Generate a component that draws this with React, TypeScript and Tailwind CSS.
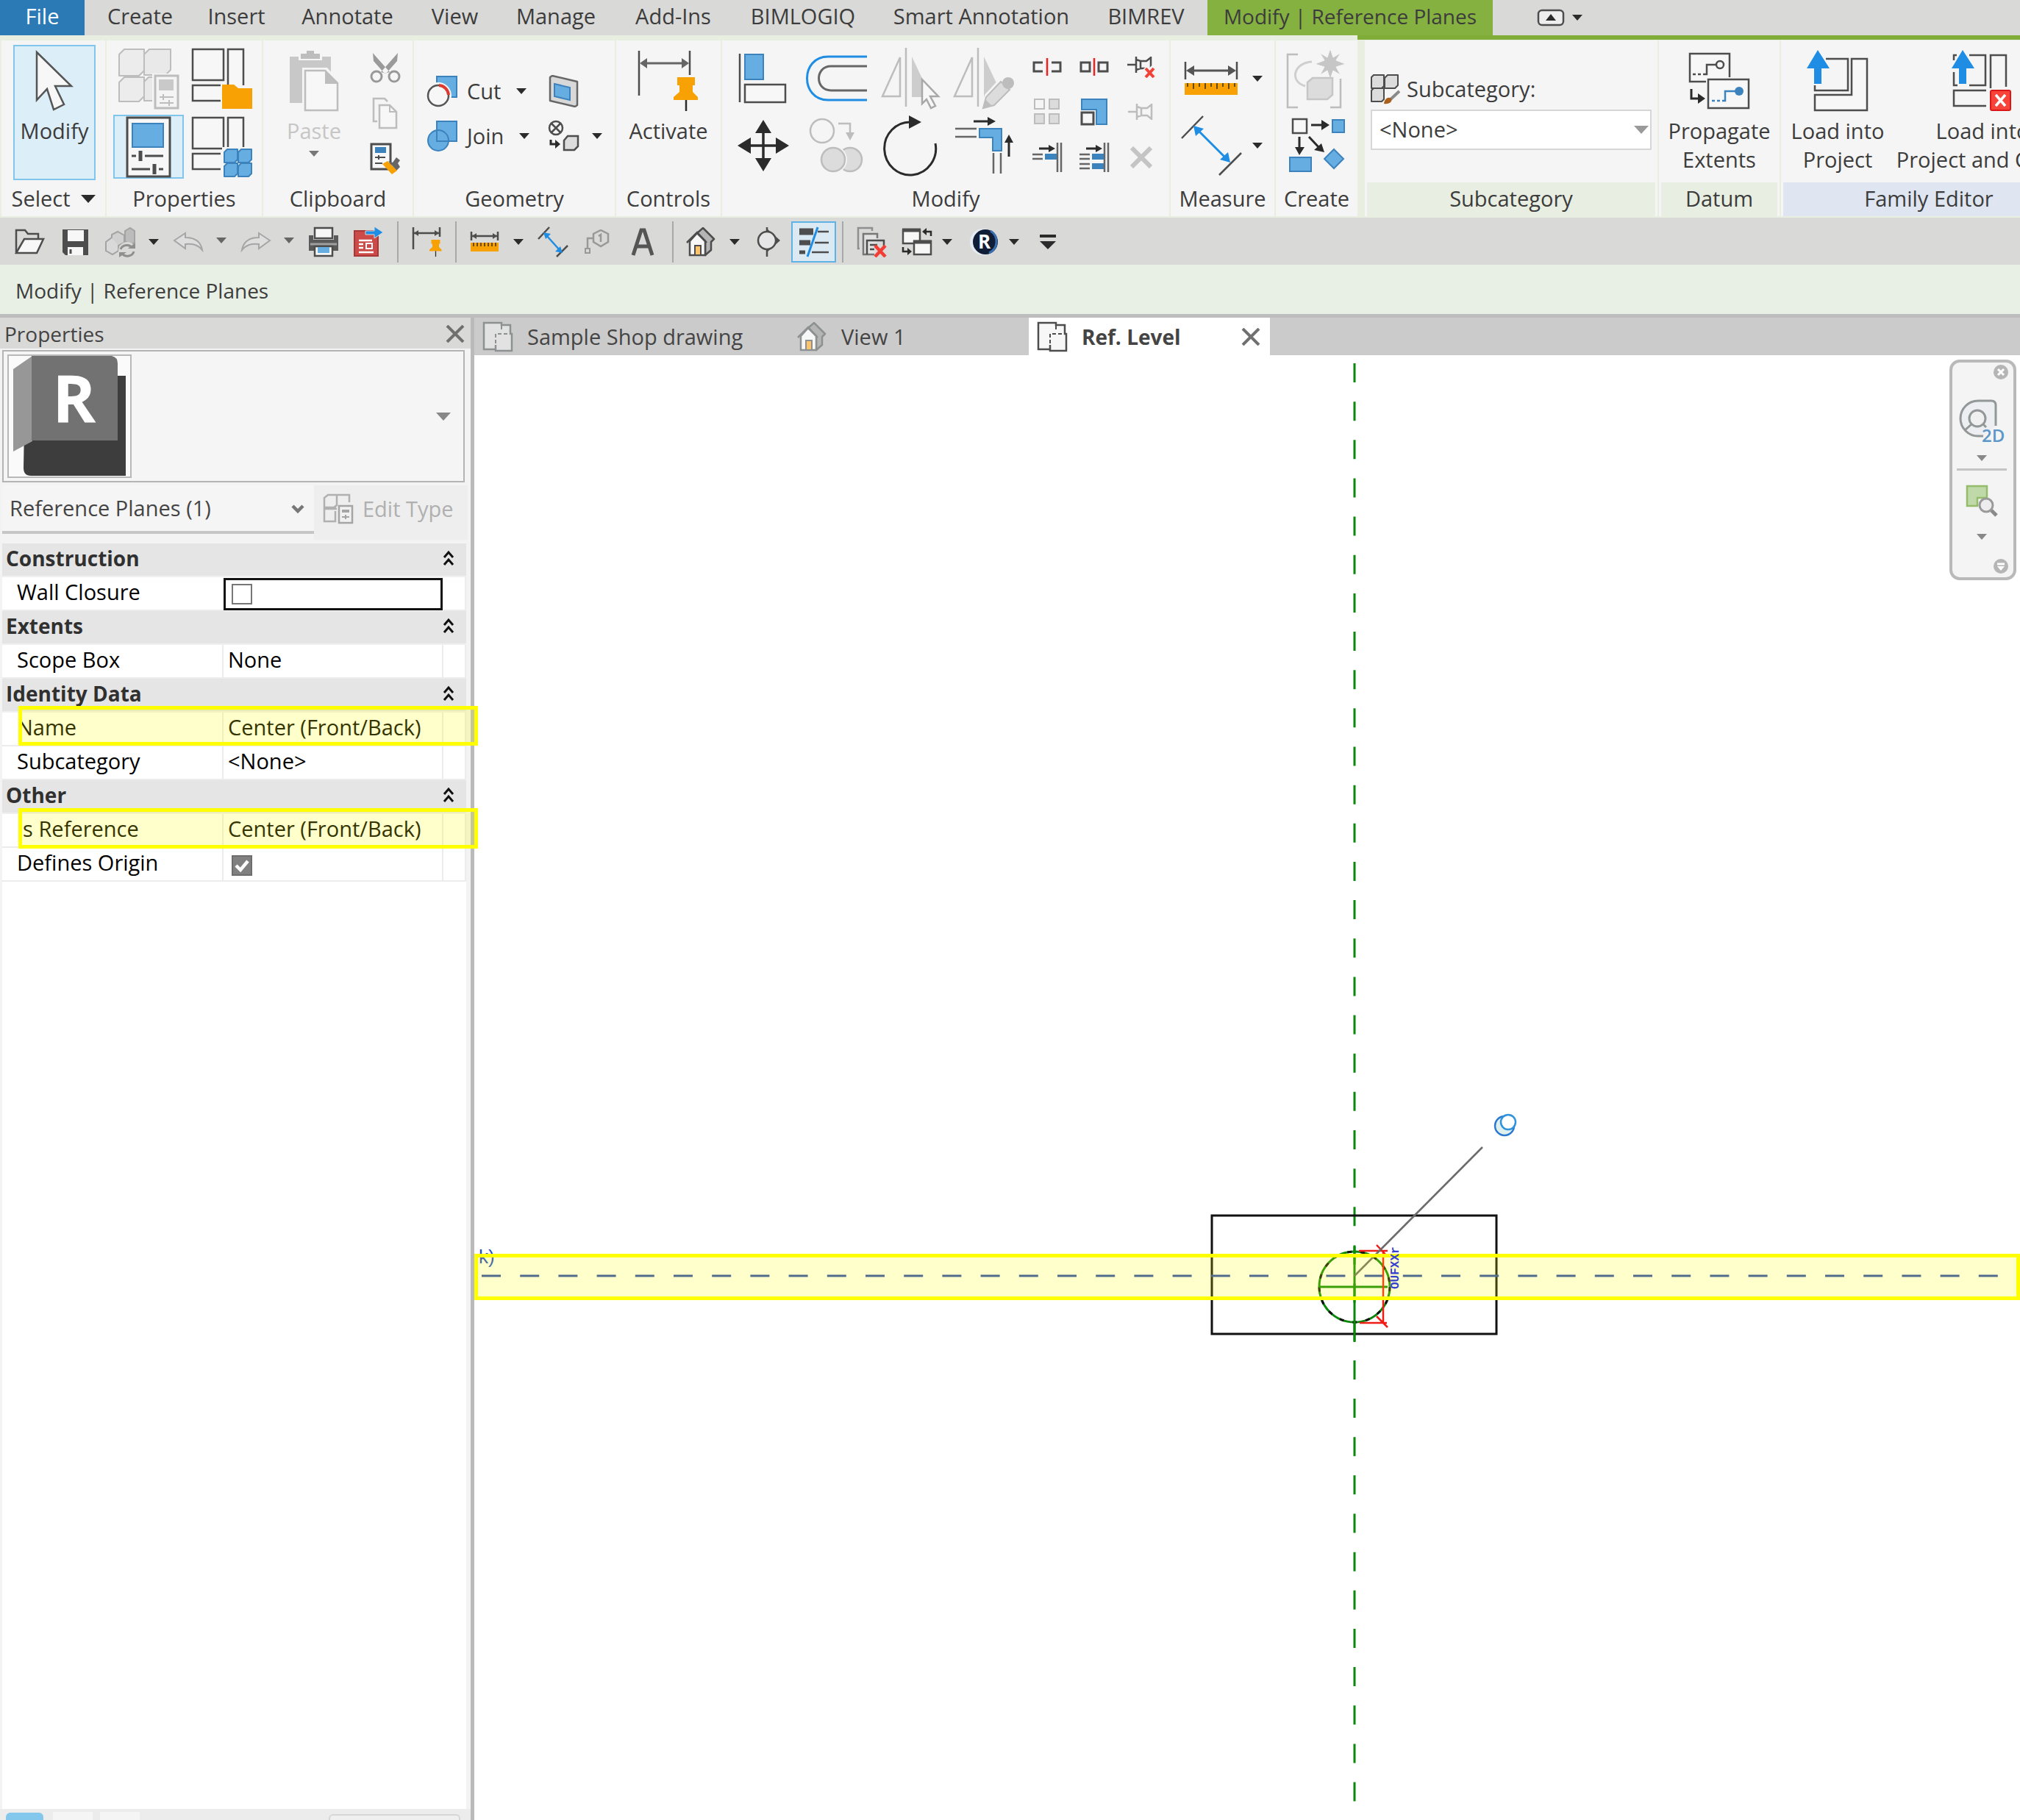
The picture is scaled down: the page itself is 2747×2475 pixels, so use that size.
import React from "react";
import type { ReactNode } from "react";

/* ---------- shared drawing helpers ---------- */

const DARK = "#4d4d4d";
const INK = "#2b2b2b";
const BLUE = "#66ade2";
const BLUE_EDGE = "#3c82bd";
const VIVID = "#1e8de3";
const ORANGE = "#f7a105";
const MUTE = "#bdbdbd";
const PALE = "#dcdcdc";
const PAPER = "#f7f7f7";

function Svg({ w, h, children }: { w: number; h: number; children: ReactNode }) {
  return (
    <svg width={w} height={h} viewBox={`0 0 ${w} ${h}`} fill="none" className="block shrink-0" aria-hidden="true">
      {children}
    </svg>
  );
}

function Caret({ color = INK }: { color?: string }) {
  return (
    <Svg w={14} h={8}>
      <path d="M0 0H14L7 8Z" fill={color} />
    </Svg>
  );
}

function Cube({ x, y, w, h, fill, edge }: { x: number; y: number; w: number; h: number; fill: string; edge: string }) {
  const b = Math.round(w / 5);
  return (
    <path
      d={`M${x} ${y + b}L${x + b} ${y}H${x + w}V${y + h - b}L${x + w - b} ${y + h}H${x}Z`}
      fill={fill}
      stroke={edge}
      strokeWidth={2}
      strokeLinejoin="round"
    />
  );
}

function Pin({ x, y, s = 1 }: { x: number; y: number; s?: number }) {
  return (
    <g transform={`translate(${x} ${y}) scale(${s})`}>
      <path d="M17 30V46" stroke={INK} strokeWidth={2.5} />
      <path d="M5 0H29V11H26V20L33 27V31H0V27L8 20V11H5Z" fill={ORANGE} />
    </g>
  );
}

/* ---------- ribbon icons ---------- */

const ArrowCursor = () => (
  <Svg w={52} h={84}>
    <path d="M2 3L49 49H27L39 74L25 81L16 53L2 68Z" fill={PAPER} stroke="#555" strokeWidth={2.5} />
  </Svg>
);

const TypeProperties = () => (
  <Svg w={84} h={84}>
    <Cube x={36} y={2} w={36} h={35} fill="#e9e9e9" edge={MUTE} />
    <Cube x={2} y={2} w={34} h={36} fill="#ececec" edge={MUTE} />
    <Cube x={36} y={40} w={30} h={32} fill="#e9e9e9" edge={MUTE} />
    <Cube x={2} y={40} w={34} h={33} fill="#ececec" edge={MUTE} />
    <rect x={47} y={35} width={37} height={49} fill="#f5f5f5" />
    <rect x={51} y={38} width={31} height={44} fill="#f4f4f4" stroke={MUTE} strokeWidth={3} />
    <rect x={56} y={43} width={20} height={15} fill="#c9c9c9" />
    <path d="M57 67H76M57 75H76M62 63V71M70 71V79" stroke={MUTE} strokeWidth={2} />
  </Svg>
);

const FamilyFrame = () => (
  <g stroke={DARK} strokeWidth={2.5}>
    <rect x={2} y={2} width={42} height={42} fill={PAPER} />
    <path d="M50 52V2H71V51" fill={PAPER} />
    <path d="M40 51H2V72H40" fill={PAPER} />
  </g>
);

const FamilyCategory = () => (
  <Svg w={84} h={84}>
    <FamilyFrame />
    <path d="M42 50H58L64 55H83V83H42Z" fill={ORANGE} />
  </Svg>
);

const FamilyTypes = () => (
  <Svg w={84} h={84}>
    <FamilyFrame />
    <rect x={42} y={42} width={42} height={42} fill="#f5f5f5" />
    <Cube x={45} y={45} w={18} h={18} fill={BLUE} edge={BLUE_EDGE} />
    <Cube x={64} y={45} w={18} h={18} fill={BLUE} edge={BLUE_EDGE} />
    <Cube x={45} y={64} w={18} h={18} fill={BLUE} edge={BLUE_EDGE} />
    <Cube x={64} y={64} w={18} h={18} fill={BLUE} edge={BLUE_EDGE} />
  </Svg>
);

const PropertiesIcon = () => (
  <Svg w={62} h={84}>
    <rect x={2} y={2} width={58} height={80} fill={PAPER} stroke={DARK} strokeWidth={3} />
    <rect x={9} y={10} width={42} height={32} fill={BLUE} stroke={BLUE_EDGE} strokeWidth={2} />
    <path d="M8 54H51M8 72H51" stroke={DARK} strokeWidth={3} />
    <path d="M14 54H26M33 72H45" stroke={PAPER} strokeWidth={5} />
    <path d="M20 47V61M39 65V79" stroke={DARK} strokeWidth={5} />
  </Svg>
);

const PasteIcon = () => (
  <Svg w={70} h={86}>
    <rect x={2} y={10} width={56} height={63} fill="#c8c8c8" />
    <rect x={14} y={6} width={32} height={9} fill="#f5f5f5" />
    <rect x={25} y={2} width={10} height={8} fill={MUTE} />
    <rect x={17} y={6} width={26} height={7} fill={MUTE} />
    <path d="M19 25H53L69 43V86H19Z" fill="#f5f5f5" />
    <path d="M23 29H50L67 46V83H23Z" fill={PAPER} stroke={MUTE} strokeWidth={2.5} />
    <path d="M50 28V47H68Z" fill={MUTE} />
  </Svg>
);

const ScissorsIcon = () => (
  <Svg w={42} h={42}>
    <path d="M27 27L4 1L5 12L20 29ZM15 27L38 1L37 12L22 29Z" fill="#9a9a9a" />
    <circle cx={9} cy={33} r={7} stroke="#999" strokeWidth={3} />
    <circle cx={33} cy={33} r={7} stroke="#999" strokeWidth={3} />
  </Svg>
);

const CopyPages = () => (
  <Svg w={36} h={44}>
    <path d="M7 33H2V2H17L21 6" stroke={MUTE} strokeWidth={2.5} />
    <path d="M10 11H24L33 20V42H10Z" fill={PAPER} stroke={MUTE} strokeWidth={2.5} />
    <path d="M24 11V20H33" stroke={MUTE} strokeWidth={2} />
  </Svg>
);

const MatchType = () => (
  <Svg w={42} h={44}>
    <rect x={2} y={2} width={26} height={34} fill={PAPER} stroke={DARK} strokeWidth={3} />
    <rect x={7} y={6} width={15} height={8} fill={BLUE_EDGE} />
    <path d="M7 20H21M7 28H17M12 17V23" stroke={DARK} strokeWidth={2} />
    <path d="M25 25L31 27L36 20L41 24L38 28L41 33L36 38Z" fill="#666" />
    <path d="M17 29L24 25L37 38L30 43Z" fill={ORANGE} />
  </Svg>
);

const CutGeometry = () => (
  <Svg w={42} h={44}>
    <rect x={14} y={2} width={27} height={28} fill={BLUE} stroke={BLUE_EDGE} strokeWidth={2} />
    <circle cx={16} cy={28} r={18} fill="#f5f5f5" />
    <circle cx={16} cy={28} r={14} fill={PAPER} stroke="#555" strokeWidth={2.5} />
    <path d="M17 14A14 14 0 0 1 30 27" stroke="#dd3a30" strokeWidth={4} />
  </Svg>
);

const JoinGeometry = () => (
  <Svg w={42} h={44}>
    <rect x={14} y={2} width={27} height={27} fill={BLUE} stroke={BLUE_EDGE} strokeWidth={2} />
    <circle cx={16} cy={28} r={14} fill={BLUE} stroke={BLUE_EDGE} strokeWidth={2} />
    <path d="M14 14V29H29" stroke={BLUE_EDGE} strokeWidth={2} />
  </Svg>
);

const VoidPanel = () => (
  <Svg w={42} h={44}>
    <path d="M3 3L6 1L40 9V41L37 43L3 35Z" fill="#d8d8d8" stroke="#666" strokeWidth={2.5} strokeLinejoin="round" />
    <path d="M9 12L30 17V34L9 29Z" fill={BLUE} stroke={BLUE_EDGE} strokeWidth={2} />
  </Svg>
);

const CopeIcon = () => (
  <Svg w={44} h={44}>
    <circle cx={11} cy={11} r={9} stroke={DARK} strokeWidth={2.5} />
    <path d="M5 5L17 17M17 5L5 17" stroke={DARK} strokeWidth={2.5} />
    <path d="M4 27V33H12" stroke={INK} strokeWidth={3} />
    <path d="M10 27L17 33L10 39Z" fill={INK} />
    <path d="M22 28L27 22H41V36L36 41H22Z" fill={PALE} stroke={DARK} strokeWidth={2.5} />
  </Svg>
);

const ActivateDimension = () => (
  <Svg w={84} h={86}>
    <path d="M2 2V63M71 2V35" stroke={DARK} strokeWidth={2.5} />
    <path d="M10 19H64" stroke="#666" strokeWidth={3} />
    <path d="M3 19L13 12V26ZM70 19L60 12V26Z" fill="#666" />
    <Pin x={49} y={38} />
  </Svg>
);

const AlignIcon = () => (
  <Svg w={68} h={70}>
    <path d="M2 1V67" stroke={DARK} strokeWidth={2.5} />
    <rect x={9} y={2} width={25} height={34} fill={BLUE} stroke={BLUE_EDGE} strokeWidth={2} />
    <rect x={9} y={43} width={55} height={24} fill={PAPER} stroke={DARK} strokeWidth={2.5} />
  </Svg>
);

const OffsetIcon = () => (
  <Svg w={84} h={66}>
    <path d="M83 3H30C-8 3 -8 62 30 62H83" stroke={VIVID} strokeWidth={3} />
    <path d="M83 16H34C12 16 12 49 34 49H83" stroke="#666" strokeWidth={3} />
  </Svg>
);

const MirrorBase = () => (
  <g>
    <path d="M3 66L27 13V66Z" stroke={MUTE} strokeWidth={2.5} />
    <path d="M35 0V80" stroke={MUTE} strokeWidth={2.5} />
    <path d="M43 12L69 67H43Z" fill="#cdcdcd" />
  </g>
);

const MirrorPick = () => (
  <Svg w={82} h={84}>
    <MirrorBase />
    <path d="M57 43L79 66H68L75 79L69 82L63 70L57 76Z" fill={PAPER} stroke="#a8a8a8" strokeWidth={2.5} />
  </Svg>
);

const MirrorDraw = () => (
  <Svg w={86} h={84}>
    <MirrorBase />
    <path d="M39 84L44 64L66 40L84 56L60 80Z" fill="#f5f5f5" />
    <path d="M42 82L46 67L66 46L78 57L57 78Z" fill={PALE} stroke={MUTE} strokeWidth={2} />
    <path d="M42 82L45 70L54 79Z" fill={MUTE} />
    <circle cx={76} cy={48} r={8} fill={MUTE} />
  </Svg>
);

const MoveIcon = () => (
  <Svg w={70} h={70}>
    <path d="M35 12V58M12 35H58" stroke={INK} strokeWidth={3.5} />
    <path d="M35 0L46 18H24ZM35 70L46 52H24ZM0 35L18 24V46ZM70 35L52 24V46Z" fill={INK} />
  </Svg>
);

const CopyIcon = () => (
  <Svg w={76} h={76}>
    <circle cx={18} cy={18} r={16} stroke={MUTE} strokeWidth={2.5} />
    <path d="M40 8H56V24" stroke={MUTE} strokeWidth={2.5} />
    <path d="M50 20H62L56 31Z" fill={MUTE} />
    <circle cx={56} cy={57} r={16} fill={PALE} stroke={MUTE} strokeWidth={2.5} />
    <circle cx={33} cy={57} r={19} fill="#f5f5f5" />
    <circle cx={33} cy={57} r={16} fill={PALE} stroke={MUTE} strokeWidth={2.5} />
  </Svg>
);

const RotateIcon = () => (
  <Svg w={78} h={84}>
    <path d="M73 39A35 36 0 1 1 40 10" stroke={INK} strokeWidth={3} />
    <path d="M37 1L54 10L37 19Z" fill={INK} />
  </Svg>
);

const TrimCorner = () => (
  <Svg w={82} h={80}>
    <path d="M27 7H48" stroke={INK} strokeWidth={3} />
    <path d="M46 1L57 7L46 13Z" fill={INK} />
    <path d="M2 17H31M2 28H31M54 50V78M64 50V78" stroke="#666" strokeWidth={2.5} />
    <path d="M35 17H65V47H53V29H35Z" fill={BLUE} stroke={BLUE_EDGE} strokeWidth={2} />
    <path d="M75 55V34" stroke={INK} strokeWidth={3} />
    <path d="M69 36H81L75 25Z" fill={INK} />
  </Svg>
);

const SplitIcon = () => (
  <Svg w={40} h={24}>
    <path d="M14 6H2V18H14M26 6H38V18H26" stroke={DARK} strokeWidth={3} />
    <path d="M20 0V24" stroke="#e22" strokeWidth={2.5} />
  </Svg>
);

const SplitGap = () => (
  <Svg w={40} h={24}>
    <path d="M2 6H14V18H2ZM26 6H38V18H26Z" stroke={DARK} strokeWidth={3} />
    <path d="M20 0V24" stroke="#e22" strokeWidth={2.5} />
  </Svg>
);

const SidePin = ({ color }: { color: string }) => (
  <path d="M0 12H12M12 1V23M12 5L18 7H26L31 3M12 19L18 17H26L31 21M32 1V23M18 7V17" stroke={color} strokeWidth={2.5} />
);

const UnpinIcon = () => (
  <Svg w={38} h={30}>
    <SidePin color={DARK} />
    <path d="M24 16L36 29M36 16L24 29" stroke="#f5f5f5" strokeWidth={8} />
    <path d="M25 17L36 29M36 17L25 29" stroke="#f24338" strokeWidth={4} />
  </Svg>
);

const PinIcon = () => (
  <Svg w={36} h={24}>
    <SidePin color={MUTE} />
  </Svg>
);

const ArrayIcon = () => (
  <Svg w={36} h={36}>
    <rect x={1} y={1} width={13} height={13} stroke={MUTE} strokeWidth={2} />
    <rect x={21} y={1} width={13} height={13} fill={PALE} stroke={MUTE} strokeWidth={2} />
    <rect x={1} y={21} width={13} height={13} fill={PALE} stroke={MUTE} strokeWidth={2} />
    <rect x={21} y={21} width={13} height={13} fill={PALE} stroke={MUTE} strokeWidth={2} />
  </Svg>
);

const ScaleIcon = () => (
  <Svg w={38} h={38}>
    <path d="M2 2H36V36H22V16H2Z" fill={BLUE} stroke={BLUE_EDGE} strokeWidth={2} />
    <rect x={2} y={20} width={16} height={16} fill={PAPER} stroke={DARK} strokeWidth={3} />
  </Svg>
);

const TrimSingle = () => (
  <Svg w={42} h={42}>
    <path d="M10 9H24" stroke={INK} strokeWidth={3} />
    <path d="M23 4L32 9L23 14Z" fill={INK} />
    <path d="M35 1V41M40 1V41M1 17H15M1 23H15" stroke="#666" strokeWidth={2.5} />
    <rect x={18} y={16} width={16} height={8} fill={BLUE_EDGE} />
  </Svg>
);

const TrimMultiple = () => (
  <Svg w={42} h={42}>
    <path d="M10 9H24" stroke={INK} strokeWidth={3} />
    <path d="M23 4L32 9L23 14Z" fill={INK} />
    <path d="M35 1V41M40 1V41M1 17H15M1 23H15M1 30H15M1 36H15" stroke="#666" strokeWidth={2.5} />
    <rect x={18} y={16} width={16} height={8} fill={BLUE_EDGE} />
    <rect x={18} y={29} width={16} height={8} fill={BLUE_EDGE} />
  </Svg>
);

const DeleteIcon = () => (
  <Svg w={30} h={30}>
    <path d="M2 2L28 28M28 2L2 28" stroke="#c4c4c4" strokeWidth={6} />
  </Svg>
);

const MeasureIcon = () => (
  <Svg w={74} h={46}>
    <path d="M2 0V24M72 0V24" stroke={DARK} strokeWidth={2.5} />
    <path d="M10 12H64" stroke="#555" strokeWidth={3} />
    <path d="M3 12L14 5V19ZM71 12L60 5V19Z" fill="#555" />
    <rect x={1} y={29} width={72} height={16} fill={ORANGE} />
    <path d="M5 29V34M13 29V37M21 29V34M29 29V37M37 29V34M45 29V37M53 29V34M61 29V37M69 29V34" stroke="#6b4a10" strokeWidth={2} />
  </Svg>
);

const AlignedDimension = () => (
  <Svg w={84} h={84}>
    <path d="M2 32L31 2M53 82L83 52" stroke={DARK} strokeWidth={2.5} />
    <path d="M25 22L61 58" stroke={VIVID} strokeWidth={3} />
    <path d="M18 15L32 19L21 29ZM68 65L54 61L65 51Z" fill={VIVID} />
  </Svg>
);

const CreateGroup = () => (
  <Svg w={84} h={84}>
    <path d="M16 9H2V81H16M60 81H74V42" stroke={MUTE} strokeWidth={2.5} />
    <path d="M35 19C10 20 4 46 26 52" stroke="#cfcfcf" strokeWidth={3} />
    <path
      d="M60 1L64 13L74 7L68 17L81 22L68 26L74 37L64 31L60 43L56 31L46 37L52 26L39 22L52 17L46 7L56 13Z"
      fill="#c6c6c6"
      stroke="#f5f5f5"
      strokeWidth={1}
    />
    <path d="M29 47L36 41H63V64L56 70H29Z" fill={PALE} stroke="#c6c6c6" strokeWidth={2.5} />
  </Svg>
);

const CreateSimilar = () => (
  <Svg w={78} h={78}>
    <rect x={6} y={3} width={19} height={19} fill={PAPER} stroke={DARK} strokeWidth={2.5} />
    <path d="M31 11H48M15 27V44M28 27L42 42" stroke={INK} strokeWidth={3} />
    <path d="M45 4L56 11L45 18ZM9 41H22L15 52ZM49 48L35 45L45 36Z" fill={INK} />
    <rect x={60} y={4} width={16} height={17} fill={BLUE} stroke={BLUE_EDGE} strokeWidth={2} />
    <rect x={2} y={55} width={29} height={19} fill={BLUE} stroke={BLUE_EDGE} strokeWidth={2} />
    <path d="M62 44L75 57L62 70L49 57Z" fill={BLUE} stroke={BLUE_EDGE} strokeWidth={2} />
  </Svg>
);

const SubcategoryIcon = () => (
  <Svg w={40} h={42}>
    <Cube x={1} y={2} w={17} h={18} fill={PALE} edge={DARK} />
    <Cube x={19} y={2} w={18} h={18} fill={PALE} edge={DARK} />
    <Cube x={1} y={20} w={17} h={18} fill={PALE} edge={DARK} />
    <path d="M39 24L26 36" stroke="#8a8a8a" strokeWidth={4} />
    <path d="M18 41C19 34 24 31 28 34C30 39 24 42 18 41Z" fill="#a8601c" />
  </Svg>
);

const PropagateIcon = () => (
  <Svg w={84} h={78}>
    <path d="M24 40H2V2H56V34" fill={PAPER} stroke={DARK} strokeWidth={2.5} />
    <path d="M6 30H20" stroke={DARK} strokeWidth={2.5} strokeDasharray="4 3" />
    <path d="M20 30H25V17H38" stroke={DARK} strokeWidth={2.5} />
    <circle cx={43} cy={17} r={5} stroke={DARK} strokeWidth={2.5} />
    <rect x={27} y={37} width={55} height={39} fill={PAPER} stroke={DARK} strokeWidth={2.5} />
    <path d="M32 66H46" stroke={BLUE_EDGE} strokeWidth={2.5} strokeDasharray="4 3" />
    <path d="M46 66H50V53H64" stroke={BLUE_EDGE} strokeWidth={2.5} />
    <circle cx={69} cy={53} r={6} fill={BLUE_EDGE} />
    <path d="M4 50V63H14" stroke={INK} strokeWidth={3} />
    <path d="M13 56L23 63L13 70Z" fill={INK} />
  </Svg>
);

const LoadProject = () => (
  <Svg w={84} h={84}>
    <path d="M26 12H56V55H11V48" stroke={DARK} strokeWidth={2.5} />
    <path d="M61 12H82V82H11V61H61Z" fill={PAPER} stroke={DARK} strokeWidth={2.5} />
    <path d="M15 0L31 25H20V46H10V25H0Z" fill={VIVID} />
  </Svg>
);

const LoadProjectClose = () => (
  <Svg w={84} h={84}>
    <path d="M24 7H46V48H24M3 30V48H8M3 14V7H7" stroke={DARK} strokeWidth={2.5} />
    <path d="M53 52V7H74V50M47 55H3V76H47" stroke={DARK} strokeWidth={2.5} />
    <path d="M15 0L31 25H20V46H10V25H0Z" fill={VIVID} />
    <rect x={53} y={55} width={27} height={27} rx={2} fill="#f8433a" stroke="#d81818" strokeWidth={2} />
    <path d="M60 61L73 76M73 61L60 76" stroke="#fff" strokeWidth={3.5} />
  </Svg>
);

/* ---------- quick access icons ---------- */

const OpenIcon = () => (
  <Svg w={42} h={36}>
    <path d="M3 32V2H15L19 7H33V14" stroke={DARK} strokeWidth={2.5} />
    <path d="M3 33L14 14H40L31 33Z" fill={PAPER} stroke={DARK} strokeWidth={2.5} />
  </Svg>
);

const SaveIcon = () => (
  <Svg w={37} h={37}>
    <path d="M1 1H36V36H5L1 32Z" fill={DARK} />
    <rect x={8} y={2} width={22} height={15} fill={PAPER} />
    <rect x={8} y={25} width={21} height={11} fill={PAPER} />
    <path d="M12 28V34" stroke={DARK} strokeWidth={3} />
  </Svg>
);

const SyncIcon = () => (
  <Svg w={42} h={42}>
    <path d="M27 6L34 2L40 6V22L34 25L27 20Z" fill="#bcbcbc" stroke="#a3a3a3" strokeWidth={2} />
    <path d="M1 21L9 15L18 20V33L10 38L1 33Z" fill="#d9d9d9" stroke="#a3a3a3" strokeWidth={2} />
    <path d="M9 15V11L17 7L26 12V22L18 26" fill="#d0d0d0" stroke="#a3a3a3" strokeWidth={2} />
    <circle cx={30} cy={33} r={12} fill="#d9d9d8" />
    <path d="M21 31A9 8 0 0 1 37 29M39 34A9 8 0 0 1 23 37" stroke="#8f8f8f" strokeWidth={3} />
    <path d="M31 30H41V22ZM29 35H19V42Z" fill="#8f8f8f" />
  </Svg>
);

const UndoIcon = () => (
  <Svg w={42} h={28}>
    <path d="M2 12L17 2V8C30 8 38 14 40 25C34 18 28 16 17 17V23Z" fill="#dedede" stroke="#a6a6a6" strokeWidth={2} />
  </Svg>
);

const RedoIcon = () => (
  <Svg w={42} h={28}>
    <path d="M40 12L25 2V8C12 8 4 14 2 25C8 18 14 16 25 17V23Z" fill="#dedede" stroke="#a6a6a6" strokeWidth={2} />
  </Svg>
);

const PrintIcon = () => (
  <Svg w={42} h={42}>
    <rect x={9} y={2} width={24} height={14} fill={PAPER} stroke={DARK} strokeWidth={2.5} />
    <path d="M1 12H7V18H35V12H41V33H1Z" fill="#5a5a5a" />
    <path d="M3 24H39" stroke="#a0a0a0" strokeWidth={3} />
    <rect x={9} y={27} width={24} height={13} fill={PAPER} stroke={DARK} strokeWidth={2.5} />
    <rect x={13} y={28} width={16} height={8} fill={BLUE} />
  </Svg>
);

const PdfIcon = () => (
  <Svg w={42} h={42}>
    <rect x={2} y={6} width={32} height={34} fill="#cc4a48" stroke="#a83735" strokeWidth={2} />
    <path d="M8 19H26M8 24H14M8 29H14M8 35H28" stroke="#fff" strokeWidth={2.5} />
    <rect x={18} y={23} width={8} height={7} stroke="#fff" strokeWidth={2} />
    <path d="M17 6H29V0L41 8L29 16V11H17Z" fill={VIVID} stroke="#d9d9d9" strokeWidth={1} />
  </Svg>
);

const QuickActivate = () => (
  <Svg w={42} h={42}>
    <path d="M2 1V31M38 1V14M2 9H38" stroke={DARK} strokeWidth={2.5} />
    <path d="M3 9L9 5V13ZM37 9L31 5V13Z" fill={DARK} />
    <Pin x={24} y={18} s={0.5} />
  </Svg>
);

const QuickMeasure = () => (
  <Svg w={40} h={28}>
    <path d="M2 0V12M38 0V12M2 6H38" stroke={DARK} strokeWidth={2.5} />
    <path d="M3 6L9 2V10ZM37 6L31 2V10Z" fill={DARK} />
    <rect x={1} y={15} width={38} height={12} fill={ORANGE} />
    <path d="M5 15V20M10 15V20M15 15V20M20 15V20M25 15V20M30 15V20M35 15V20" stroke="#6b4a10" strokeWidth={2} />
  </Svg>
);

const QuickDimension = () => (
  <Svg w={42} h={42}>
    <path d="M1 17L16 1M26 41L41 26" stroke={DARK} strokeWidth={2.5} />
    <path d="M12 12L30 32" stroke={VIVID} strokeWidth={2.5} />
    <path d="M8 8L18 10L11 17ZM34 36L24 34L31 27Z" fill={VIVID} />
  </Svg>
);

const TagIcon = () => (
  <Svg w={34} h={34}>
    <path d="M22 1L32 6V17L22 23L12 17V6Z" stroke="#999" strokeWidth={2.5} />
    <path d="M19 9L22 7V17" stroke="#999" strokeWidth={2.5} />
    <path d="M12 12H4V26" stroke="#999" strokeWidth={2.5} />
    <rect x={1} y={26} width={6} height={6} stroke="#999" strokeWidth={2} />
  </Svg>
);

const HouseIcon = ({ color = DARK }: { color?: string }) => (
  <Svg w={40} h={40}>
    <path d="M15 8L23 1L38 16L34 20V31L26 38V19Z" fill="#b5b5b5" stroke={color} strokeWidth={2.5} strokeLinejoin="round" />
    <path d="M5 38V19L15 8L26 19V38Z" fill={PAPER} stroke={color} strokeWidth={2.5} />
    <path d="M1 21L15 7L28 21" stroke={color} strokeWidth={2.5} />
    <rect x={12} y={25} width={8} height={13} fill="#fbc36b" stroke={color} strokeWidth={2} />
  </Svg>
);

const SectionIcon = () => (
  <Svg w={34} h={42}>
    <path d="M15 1V8M15 32V41" stroke={DARK} strokeWidth={2.5} />
    <path d="M15 3L33 19L15 35Z" fill={DARK} />
    <circle cx={15} cy={19} r={12} fill="#e6e6e6" stroke={DARK} strokeWidth={2.5} />
  </Svg>
);

const ThinLines = () => (
  <Svg w={42} h={42}>
    <path d="M1 7H20" stroke={DARK} strokeWidth={9} />
    <path d="M1 22H16" stroke={DARK} strokeWidth={7} />
    <path d="M1 35H9" stroke={DARK} strokeWidth={5} />
    <path d="M26 7H41M22 22H41M18 35H41" stroke={DARK} strokeWidth={2.5} />
    <path d="M26 1L12 41" stroke={VIVID} strokeWidth={3} />
  </Svg>
);

const CloseInactive = () => (
  <Svg w={42} h={42}>
    <path d="M4 30H2V2H21V6" stroke="#8f8f8f" strokeWidth={2.5} />
    <path d="M24 38H9V10H28V16" fill="#e2e2e2" stroke="#777" strokeWidth={2.5} />
    <path d="M14 38V19H37V26M18 25H28M18 31H24" stroke={DARK} strokeWidth={2.5} />
    <path d="M25 26L39 41M39 26L25 41" stroke="#f23c34" strokeWidth={4.5} />
  </Svg>
);

const SwitchWindows = () => (
  <Svg w={42} h={38}>
    <rect x={2} y={3} width={23} height={18} fill={PAPER} stroke={DARK} strokeWidth={2.5} />
    <path d="M1 3H26" stroke={DARK} strokeWidth={5} />
    <rect x={17} y={18} width={23} height={18} fill={PAPER} stroke={DARK} strokeWidth={2.5} />
    <path d="M16 19H41" stroke={DARK} strokeWidth={5} />
    <path d="M32 5H40V11M2 26V32H10" stroke={INK} strokeWidth={2.5} />
    <path d="M34 0L28 5L34 10ZM8 27L14 32L8 37Z" fill={INK} />
  </Svg>
);

const RoundR = () => (
  <Svg w={40} h={40}>
    <circle cx={18} cy={20} r={18} fill="#e6ebf2" />
    <circle cx={21} cy={20} r={17} fill="#0f1e36" />
    <path d="M28 5A17 17 0 0 1 26 35" stroke="#3a6fae" strokeWidth={3} />
    <text x={11} y={29} fontFamily="Open Sans, sans-serif" fontWeight={700} fontSize={26} fill="#fff">
      R
    </text>
  </Svg>
);

const CustomizeIcon = () => (
  <Svg w={22} h={20}>
    <path d="M0 2H22" stroke={INK} strokeWidth={4} />
    <path d="M0 9H22L11 20Z" fill={INK} />
  </Svg>
);

/* ---------- other icons ---------- */

const CloseX = () => (
  <Svg w={26} h={24}>
    <path d="M2 1L24 23M24 1L2 23" stroke="#707070" strokeWidth={4} />
  </Svg>
);

const SheetIcon = ({ color = DARK }: { color?: string }) => (
  <Svg w={42} h={42}>
    <path d="M2 38V2H27V5H38V17H40V40H18V38Z" fill="#f1f1f1" fillOpacity={0.6} />
    <path d="M18 38H2V2H26V5H38V17H40V40H18V32" stroke={color} strokeWidth={2.5} />
    <path d="M26 6V12M18 30V17H38" stroke={color} strokeWidth={2} strokeDasharray="5 3" />
  </Svg>
);

const DoubleChevron = () => (
  <Svg w={16} h={22}>
    <path d="M2 10L8 3L14 10M2 20L8 13L14 20" stroke="#111" strokeWidth={3} />
  </Svg>
);

const RevitLogo = () => (
  <Svg w={154} h={164}>
    <path d="M16 42H153V163H24Q14 163 14 152Z" fill="#3d3d3d" />
    <path d="M138 27H153V163H138Z" fill="#3d3d3d" />
    <path d="M0 18L26 0V116L0 130Z" fill="#979797" />
    <path d="M25 0H134Q142 2 142 10V115H25Z" fill="#727272" />
    <text x={53} y={91} fontFamily="Open Sans, sans-serif" fontWeight={700} fontSize={90} fill="#fff">
      R
    </text>
  </Svg>
);

const EditTypeIcon = () => (
  <Svg w={42} h={42}>
    <path d="M18 19H2V6L7 2H19V16L15 19M19 2H36V12M19 21H2V38H17V24" stroke="#b0b0b0" strokeWidth={2.5} />
    <rect x={22} y={17} width={18} height={23} fill="#f1f1f1" stroke="#a5a5a5" strokeWidth={2.5} />
    <rect x={26} y={22} width={10} height={4} fill="#a5a5a5" />
    <path d="M26 32H36M31 29V35" stroke="#a5a5a5" strokeWidth={2} />
  </Svg>
);

/* ---------- ribbon ---------- */

const tabs: [string, string][] = [
  ["Create", "w-[137px] ml-[7px]"],
  ["Insert", "w-[125px]"],
  ["Annotate", "w-[177px]"],
  ["View", "w-[115px]"],
  ["Manage", "w-[160px]"],
  ["Add-Ins", "w-[159px]"],
  ["BIMLOGIQ", "w-[194px]"],
  ["Smart Annotation", "w-[291px]"],
  ["BIMREV", "w-[157px]"],
];

function TabBar() {
  return (
    <nav className="flex h-12 shrink-0 bg-[#d9d9d8] text-[#3c3c3c]">
      <button className="w-[115px] bg-[#2b7ab5] pb-1 text-white">File</button>
      {tabs.map(([name, cls]) => (
        <button key={name} className={`${cls} pb-1 text-center whitespace-nowrap`}>
          {name}
        </button>
      ))}
      <button className="ml-[5px] w-[388px] bg-[#85b140] pb-1 text-[28px] whitespace-nowrap">Modify | Reference Planes</button>
      <button className="ml-[60px] flex items-center gap-[10px]" aria-label="Minimize ribbon">
        <Svg w={38} h={24}>
          <rect x={2} y={2} width={34} height={20} rx={5} fill="#eee" stroke={DARK} strokeWidth={2.5} />
          <path d="M12 16H26L19 7Z" fill={INK} />
        </Svg>
        <Caret />
      </button>
    </nav>
  );
}

function Panel({
  title,
  className,
  tint = "",
  children,
}: {
  title: ReactNode;
  className: string;
  tint?: string;
  children: ReactNode;
}) {
  return (
    <section className={`${className} flex shrink-0 flex-col border-r-2 border-[#e8efe0] bg-[#f5f5f5]`}>
      <div className="h-[193px] pt-[6px]">{children}</div>
      <h2 className={`${tint} mx-[3px] flex h-[46px] items-center justify-center pb-[2px] whitespace-nowrap`}>{title}</h2>
    </section>
  );
}

function BigButton({ icon, children, className = "" }: { icon: ReactNode; children: ReactNode; className?: string }) {
  return (
    <button className={`${className} flex flex-col items-center text-center leading-[39px] whitespace-nowrap`}>
      <span className="flex h-[97px] items-center">{icon}</span>
      {children}
    </button>
  );
}

function IconButton({ label, children, className = "" }: { label: string; children: ReactNode; className?: string }) {
  return (
    <button aria-label={label} className={`${className} flex items-center justify-center`}>
      {children}
    </button>
  );
}

function Ribbon() {
  return (
    <div className="relative flex h-[248px] shrink-0 overflow-hidden bg-[#e8efe0] pt-[7px] pb-[2px] pl-[2px]">
      <div className="absolute top-0 right-0 left-[1846px] h-[6px] bg-[#7fad38]" />

      <Panel
        className="w-[143px]"
        title={
          <button className="flex items-center gap-[14px]">
            Select
            <Svg w={20} h={11}>
              <path d="M0 0H20L10 11Z" fill={INK} />
            </Svg>
          </button>
        }
      >
        <BigButton
          icon={<ArrowCursor />}
          className="ml-[16px] h-[184px] w-[112px] bg-[#dceef7] ring-2 ring-[#80c5ec] ring-inset"
        >
          Modify
        </BigButton>
      </Panel>

      <Panel className="w-[213px]" title="Properties">
        <div className="ml-[9px] grid grid-cols-[96px_96px] grid-rows-[91px_87px] gap-x-[4px] gap-y-[4px]">
          <IconButton label="Type Properties">
            <TypeProperties />
          </IconButton>
          <IconButton label="Family Category and Parameters">
            <FamilyCategory />
          </IconButton>
          <IconButton label="Properties" className="bg-[#dceef7] ring-2 ring-[#80c5ec] ring-inset">
            <PropertiesIcon />
          </IconButton>
          <IconButton label="Family Types">
            <FamilyTypes />
          </IconButton>
        </div>
      </Panel>

      <Panel className="w-[205px]" title="Clipboard">
        <div className="flex">
          <BigButton icon={<PasteIcon />} className="ml-[24px] w-[90px] text-[#c6c6c6]">
            Paste
            <span className="pt-[8px]">
              <Caret color="#777" />
            </span>
          </BigButton>
          <div className="ml-[31px] grid grid-rows-[62px_62px_62px]">
            <IconButton label="Cut to Clipboard">
              <ScissorsIcon />
            </IconButton>
            <IconButton label="Copy to Clipboard">
              <CopyPages />
            </IconButton>
            <IconButton label="Match Type Properties">
              <MatchType />
            </IconButton>
          </div>
        </div>
      </Panel>

      <Panel className="w-[275px]" title="Geometry">
        <div className="pt-[32px]">
          <div className="flex h-[61px] items-center pl-[17px]">
            <button className="flex items-center">
              <CutGeometry />
              <span className="flex w-[123px] items-center gap-[21px] pl-[13px]">
                Cut <Caret />
              </span>
            </button>
            <IconButton label="Split Face">
              <VoidPanel />
            </IconButton>
          </div>
          <div className="flex h-[61px] items-center pl-[17px]">
            <button className="flex items-center">
              <JoinGeometry />
              <span className="flex w-[123px] items-center gap-[21px] pl-[13px]">
                Join <Caret />
              </span>
            </button>
            <IconButton label="Cope" className="gap-[16px]">
              <CopeIcon />
              <Caret />
            </IconButton>
          </div>
        </div>
      </Panel>

      <Panel className="w-[144px]" title="Controls">
        <BigButton icon={<ActivateDimension />} className="w-full">
          Activate
        </BigButton>
      </Panel>

      <Panel className="w-[610px]" title="Modify">
        <div className="flex pl-[6px]">
          <div className="grid grid-cols-[100px_100px_100px_100px] grid-rows-[91px_91px]">
            <IconButton label="Align">
              <AlignIcon />
            </IconButton>
            <IconButton label="Offset">
              <OffsetIcon />
            </IconButton>
            <IconButton label="Mirror - Pick Axis">
              <MirrorPick />
            </IconButton>
            <IconButton label="Mirror - Draw Axis">
              <MirrorDraw />
            </IconButton>
            <IconButton label="Move">
              <MoveIcon />
            </IconButton>
            <IconButton label="Copy">
              <CopyIcon />
            </IconButton>
            <IconButton label="Rotate">
              <RotateIcon />
            </IconButton>
            <IconButton label="Trim/Extend to Corner">
              <TrimCorner />
            </IconButton>
          </div>
          <div className="ml-[4px] grid grid-cols-[64px_64px_64px] grid-rows-[60px_62px_62px]">
            <IconButton label="Split Element">
              <SplitIcon />
            </IconButton>
            <IconButton label="Split with Gap">
              <SplitGap />
            </IconButton>
            <IconButton label="Unpin">
              <UnpinIcon />
            </IconButton>
            <IconButton label="Array">
              <ArrayIcon />
            </IconButton>
            <IconButton label="Scale">
              <ScaleIcon />
            </IconButton>
            <IconButton label="Pin">
              <PinIcon />
            </IconButton>
            <IconButton label="Trim/Extend Single Element">
              <TrimSingle />
            </IconButton>
            <IconButton label="Trim/Extend Multiple Elements">
              <TrimMultiple />
            </IconButton>
            <IconButton label="Delete">
              <DeleteIcon />
            </IconButton>
          </div>
        </div>
      </Panel>

      <Panel className="w-[143px]" title="Measure">
        <div className="grid grid-rows-[91px_91px] pl-[13px]">
          <div className="flex items-center gap-[14px]">
            <IconButton label="Measure" className="w-[84px]">
              <MeasureIcon />
            </IconButton>
            <Caret />
          </div>
          <div className="flex items-center gap-[14px]">
            <IconButton label="Aligned Dimension" className="w-[84px]">
              <AlignedDimension />
            </IconButton>
            <Caret />
          </div>
        </div>
      </Panel>

      <Panel className="w-[113px]" title="Create">
        <div className="grid grid-rows-[91px_91px] justify-center">
          <IconButton label="Create Group">
            <CreateGroup />
          </IconButton>
          <IconButton label="Create Similar">
            <CreateSimilar />
          </IconButton>
        </div>
      </Panel>

      <Panel className="ml-[8px] w-[400px]" title="Subcategory" tint="bg-[#e8efe2]">
        <div className="px-[8px] pt-[32px]">
          <label htmlFor="subcategory" className="flex h-[56px] items-center gap-[9px]">
            <SubcategoryIcon />
            Subcategory:
          </label>
          <div className="relative">
            <select
              id="subcategory"
              className="block h-[55px] w-full appearance-none border-2 border-[#d6d6d6] bg-white pb-[2px] pl-[10px] outline-none"
            >
              <option>&lt;None&gt;</option>
            </select>
            <span className="pointer-events-none absolute top-[22px] right-[4px]">
              <Svg w={20} h={11}>
                <path d="M0 0H20L10 11Z" fill="#9a9a9a" />
              </Svg>
            </span>
          </div>
        </div>
      </Panel>

      <Panel className="w-[166px]" title="Datum" tint="bg-[#e8efe2]">
        <BigButton icon={<PropagateIcon />} className="w-full">
          <span>
            Propagate
            <br />
            Extents
          </span>
        </BigButton>
      </Panel>

      <Panel className="w-[404px]" title="Family Editor" tint="bg-[#dfe6f1]">
        <div className="flex">
          <BigButton icon={<LoadProject />} className="w-[154px]">
            <span>
              Load into
              <br />
              Project
            </span>
          </BigButton>
          <BigButton icon={<LoadProjectClose />} className="w-[240px]">
            <span>
              Load into
              <br />
              Project and Close
            </span>
          </BigButton>
        </div>
      </Panel>
    </div>
  );
}

/* ---------- quick access toolbar ---------- */

const quickItems: [string, ReactNode, string][] = [
  ["Open", <OpenIcon />, "ml-[19px]"],
  ["Save", <SaveIcon />, "ml-[23px]"],
  ["Synchronize", <SyncIcon />, "ml-[22px]"],
  ["Synchronize options", <Caret />, "ml-[17px]"],
  ["Undo", <UndoIcon />, "ml-[19px]"],
  ["Undo history", <Caret color="#666" />, "ml-[17px] pb-1"],
  ["Redo", <RedoIcon />, "ml-[19px]"],
  ["Redo history", <Caret color="#666" />, "ml-[17px] pb-1"],
  ["Print", <PrintIcon />, "ml-[19px]"],
  ["Export PDF", <PdfIcon />, "ml-[19px]"],
  ["|", null, "ml-[18px]"],
  ["Activate Controls", <QuickActivate />, "ml-[18px]"],
  ["|", null, "ml-[17px]"],
  ["Measure", <QuickMeasure />, "ml-[18px]"],
  ["Measure options", <Caret />, "ml-[19px]"],
  ["Aligned Dimension", <QuickDimension />, "ml-[19px]"],
  ["Tag by Category", <TagIcon />, "ml-[22px]"],
  [
    "Text",
    <Svg w={32} h={38}>
      <path d="M3 37L14 3H18L29 37M7 25H25" stroke="#555" strokeWidth={5} />
    </Svg>,
    "ml-[29px]",
  ],
  ["|", null, "ml-[24px]"],
  ["Default 3D View", <HouseIcon />, "ml-[17px]"],
  ["3D View options", <Caret />, "ml-[19px]"],
  ["Section", <SectionIcon />, "ml-[22px]"],
  ["Thin Lines", <ThinLines />, "ml-[14px] h-[56px] w-[61px] border-2 border-[#5fb2e6] bg-[#dbe9f3]"],
  ["|", null, "ml-[8px]"],
  ["Close Inactive Views", <CloseInactive />, "ml-[18px]"],
  ["Switch Windows", <SwitchWindows />, "ml-[19px]"],
  ["Window list", <Caret />, "ml-[13px]"],
  ["Add-in", <RoundR />, "ml-[24px]"],
  ["Add-in options", <Caret />, "ml-[13px]"],
  ["Customize Quick Access Toolbar", <CustomizeIcon />, "ml-[28px]"],
];

function QuickAccess() {
  return (
    <div className="flex h-[64px] shrink-0 items-center bg-[#d9d9d8] pt-[2px]">
      {quickItems.map(([label, icon, cls], i) =>
        icon ? (
          <IconButton key={i} label={label} className={`${cls} shrink-0`}>
            {icon}
          </IconButton>
        ) : (
          <div key={i} className={`${cls} h-[56px] w-[2px] shrink-0 bg-[#a8a8a8]`} />
        ),
      )}
    </div>
  );
}

/* ---------- properties palette ---------- */

function GroupRow({ name }: { name: string }) {
  return (
    <tr>
      <th colSpan={3} className="h-[46px] border-b-2 border-[#f0f0f0] bg-[#e5e5e5] p-0 text-left">
        <div className="flex items-center justify-between pr-[16px] pb-[4px] pl-[5px] text-[28px] leading-[36px] font-bold text-[#303030]">
          {name}
          <button aria-label={`Collapse ${name}`}>
            <DoubleChevron />
          </button>
        </div>
      </th>
    </tr>
  );
}

function ValueRow({ name, children }: { name: ReactNode; children: ReactNode }) {
  return (
    <tr>
      <td className="h-[46px] border-r-2 border-b-2 border-[#ececec] p-0 pb-[5px] pl-[20px] leading-[36px]">{name}</td>
      <td className="h-[46px] border-r-2 border-b-2 border-[#ececec] p-0 pb-[5px] pl-[6px] leading-[36px]">{children}</td>
      <td className="h-[46px] border-r-2 border-b-2 border-[#ececec] p-0" />
    </tr>
  );
}

function PropertiesPalette() {
  return (
    <aside className="relative z-10 flex w-[645px] shrink-0 flex-col border-r-[5px] border-[#bababa] bg-[#f3f3f3]">
      <header className="flex h-[42px] shrink-0 items-center justify-between bg-[#d9d9d8] pt-[2px] pr-[8px] pl-[6px] text-[28px] text-[#444]">
        <h2>Properties</h2>
        <button aria-label="Close Properties">
          <CloseX />
        </button>
      </header>

      <button
        aria-label="Type selector"
        className="mt-[2px] ml-[3px] flex h-[180px] w-[629px] shrink-0 items-center justify-between border-2 border-[#b4b4b4] bg-[#f5f5f5] pr-[17px] pl-[5px]"
      >
        <span className="flex h-[168px] w-[169px] justify-center border-2 border-[#b8b8b8] bg-[#fafafa]">
          <RevitLogo />
        </span>
        <Svg w={20} h={11}>
          <path d="M0 0H20L10 11Z" fill="#888" />
        </Svg>
      </button>

      <div className="mt-[4px] ml-[3px] flex h-[79px] shrink-0 items-start">
        <div className="relative">
          <select
            aria-label="Instance filter"
            className="block h-[66px] w-[424px] appearance-none border-b-4 border-[#c6c6c6] bg-[#f5f5f5] pl-[10px] text-[29px] text-[#444] outline-none"
          >
            <option>Reference Planes (1)</option>
          </select>
          <span className="pointer-events-none absolute top-[26px] right-[13px]">
            <Svg w={18} h={13}>
              <path d="M2 2L9 9L16 2" stroke="#777" strokeWidth={4.5} />
            </Svg>
          </span>
        </div>
        <button disabled className="flex h-[74px] w-[209px] items-center gap-[12px] bg-[#eeeeee] pb-[10px] pl-[12px] text-[#b0b0b0]">
          <EditTypeIcon />
          Edit Type
        </button>
      </div>

      <div className="relative ml-[3px] w-[631px] flex-1 bg-white">
        <table className="w-full table-fixed border-separate border-spacing-0 text-black">
          <colgroup>
            <col className="w-[301px]" />
            <col className="w-[299px]" />
            <col className="w-[31px]" />
          </colgroup>
          <tbody>
            <GroupRow name="Construction" />
            <tr>
              <td className="h-[46px] border-b-2 border-[#ececec] p-0 pb-[5px] pl-[20px] leading-[36px]">
                <label htmlFor="wall-closure">Wall Closure</label>
              </td>
              <td className="h-[46px] p-0">
                <div className="flex h-[44px] w-[298px] items-center border-[3px] border-[#111] pl-[8px]">
                  <input
                    id="wall-closure"
                    type="checkbox"
                    className="block h-[28px] w-[28px] appearance-none border-2 border-[#777] bg-white"
                  />
                </div>
              </td>
              <td className="h-[46px] border-r-2 border-b-2 border-[#ececec] p-0" />
            </tr>
            <GroupRow name="Extents" />
            <ValueRow name="Scope Box">None</ValueRow>
            <GroupRow name="Identity Data" />
            <ValueRow name="Name">Center (Front/Back)</ValueRow>
            <ValueRow name="Subcategory">&lt;None&gt;</ValueRow>
            <GroupRow name="Other" />
            <ValueRow name="Is Reference">Center (Front/Back)</ValueRow>
            <ValueRow name={<label htmlFor="defines-origin">Defines Origin</label>}>
              <div className="relative mt-[8px] ml-[5px] h-[28px] w-[28px]">
                <input
                  id="defines-origin"
                  type="checkbox"
                  defaultChecked
                  className="block h-[28px] w-[28px] appearance-none border-2 border-[#6d6d6d] bg-[#808080]"
                />
                <span className="pointer-events-none absolute top-0 left-0">
                  <Svg w={28} h={28}>
                    <path d="M6 14L12 20L22 8" stroke="#fff" strokeWidth={4.5} />
                  </Svg>
                </span>
              </div>
            </ValueRow>
          </tbody>
        </table>
        <div className="pointer-events-none absolute top-[221px] left-[22px] h-[54px] w-[625px] border-[5px] border-[#ffff00] bg-[#ffff00]/20" />
        <div className="pointer-events-none absolute top-[360px] left-[22px] h-[55px] w-[625px] border-[5px] border-[#ffff00] bg-[#ffff00]/20" />
      </div>

      <footer className="flex h-[15px] shrink-0 items-end bg-[#ececec] pl-[8px]">
        <div className="h-[10px] w-[51px] rounded-t-md bg-[#84c7ec]" />
        <div className="ml-[13px] h-[11px] w-[54px] bg-[#f5f5f5]" />
        <div className="ml-[10px] h-[11px] w-[54px] bg-[#f5f5f5]" />
        <div className="ml-[257px] h-[8px] w-[179px] rounded-t-md border-x-2 border-t-2 border-[#d6d6d6] bg-[#efefef]" />
      </footer>
    </aside>
  );
}

/* ---------- drawing area ---------- */

function ViewTabs() {
  return (
    <div className="flex h-[51px] shrink-0 bg-[#cbcbcb] text-[#444]">
      <button className="flex w-[425px] items-center gap-[19px] pt-[1px] pl-[11px] whitespace-nowrap">
        <SheetIcon color="#8d9191" />
        Sample Shop drawing
      </button>
      <button className="flex w-[329px] items-center gap-[20px] pt-[1px] pl-[14px] whitespace-nowrap">
        <HouseIcon color="#8d9191" />
        View 1
      </button>
      <div className="flex w-[328px] items-center bg-white pt-[1px] pr-[13px] pl-[11px]">
        <button className="flex flex-1 items-center gap-[19px] text-[28px] font-bold whitespace-nowrap">
          <SheetIcon />
          Ref. Level
        </button>
        <button aria-label="Close view">
          <CloseX />
        </button>
      </div>
    </div>
  );
}

function NavigationBar() {
  return (
    <div className="absolute top-[6px] right-[5px] flex h-[300px] w-[91px] flex-col items-center rounded-[14px] border-4 border-[#b9b9b9] bg-[#f4f4f4] pt-[3px] pr-[3px] pb-[5px]">
      <button aria-label="Close navigation bar" className="mr-[4px] self-end">
        <Svg w={20} h={20}>
          <circle cx={10} cy={10} r={10} fill="#b5b5b5" />
          <path d="M6 6L14 14M14 6L6 14" stroke="#fff" strokeWidth={3} />
        </Svg>
      </button>
      <button aria-label="2D steering wheel" className="mt-[27px]">
        <Svg w={64} h={62}>
          <path d="M34 50H27A24 24 0 0 1 27 2H45Q51 2 51 8V36" fill="#eceef1" stroke="#929797" strokeWidth={3} />
          <circle cx={26} cy={26} r={11} fill="#f0f0f0" stroke="#929797" strokeWidth={3} />
          <path d="M18 34L9 42M34 34L38 38" stroke="#929797" strokeWidth={3} />
          <text x={32} y={58} fontFamily="Open Sans, sans-serif" fontWeight={600} fontSize={24} fill="#5b97c9">
            2D
          </text>
        </Svg>
      </button>
      <div className="mt-[14px]">
        <Caret color="#888" />
      </div>
      <div className="mt-[10px] h-[3px] w-[68px] shrink-0 bg-[#c4c4c4]" />
      <button aria-label="Zoom region" className="mt-[19px]">
        <Svg w={44} h={44}>
          <path d="M2 2H29V18H16V29H2Z" fill="#bfd9a8" stroke="#93bd6a" strokeWidth={2.5} />
          <path d="M35 35L42 42" stroke="#8a8a8a" strokeWidth={5} />
          <circle cx={28} cy={28} r={9} fill="#ededed" stroke="#9a9a9a" strokeWidth={3} />
        </Svg>
      </button>
      <div className="mt-[23px]">
        <Caret color="#888" />
      </div>
      <button aria-label="Navigation bar options" className="mt-auto mr-[4px] self-end">
        <Svg w={20} h={20}>
          <circle cx={10} cy={10} r={10} fill="#b5b5b5" />
          <path d="M5 7H15" stroke="#fff" strokeWidth={3} />
          <path d="M5 10H15L10 16Z" fill="#fff" />
        </Svg>
      </button>
    </div>
  );
}

function DrawingCanvas() {
  return (
    <div className="relative flex-1 overflow-hidden bg-white">
      <svg
        className="absolute inset-0 h-full w-full"
        viewBox="0 0 2102 1992"
        preserveAspectRatio="xMidYMin slice"
        fill="none"
        role="img"
        aria-label="Ref. Level plan"
      >
        <path d="M1197 11V1969" stroke="#0b870b" strokeWidth={3} strokeDasharray="26 26.15" />
        <rect x={1003} y={1170} width={387} height={161} stroke="#111" strokeWidth={3} />
        <path d="M10 1252H2072" stroke="#2448b0" strokeWidth={3} strokeDasharray="26 26.2" />
        <circle cx={1197} cy={1267} r={48} stroke="#0b870b" strokeWidth={3} />
        <circle cx={1197} cy={1267} r={48} stroke="#111" strokeWidth={3} strokeDasharray="6 12" />
        <path d="M1197 1212V1342M1149 1267H1242" stroke="#0b870b" strokeWidth={3} />
        <path d="M1203 1218H1242M1204 1316H1241M1236 1218V1316M1227 1210L1242 1226M1227 1307L1242 1322" stroke="#ee1c14" strokeWidth={2.5} />
        <path d="M1197 1252L1371 1077" stroke="#6b6b6b" strokeWidth={2.5} />
        <circle cx={1401} cy={1048} r={13} fill="#dff0ee" stroke="#2a78d0" strokeWidth={2.5} />
        <circle cx={1406} cy={1043} r={10} fill="#fff" stroke="#2f93dc" strokeWidth={2.5} />
        <text x={6} y={1235} fontFamily="Liberation Sans, sans-serif" fontSize={26} fill="#2448c8">
          k)
        </text>
      </svg>
      <div className="pointer-events-none absolute top-[1222px] right-0 left-0 h-[63px] border-[5px] border-[#ffff00] bg-[#ffff00]/20" />
      <svg
        className="pointer-events-none absolute inset-0 h-full w-full"
        viewBox="0 0 2102 1992"
        preserveAspectRatio="xMidYMin slice"
        aria-hidden="true"
      >
        <text
          transform="translate(1257 1270) rotate(-90)"
          fontFamily="Liberation Mono, monospace"
          fontWeight={700}
          fontSize={16}
          fill="#3340d0"
        >
          OUFXXr
        </text>
      </svg>
      <NavigationBar />
    </div>
  );
}

export default function App() {
  return (
    <div className="flex h-screen flex-col overflow-hidden bg-white font-['Open_Sans','Noto_Sans',sans-serif] text-[29px] leading-[40px] text-[#3c3c3c]">
      <TabBar />
      <Ribbon />
      <QuickAccess />
      <div className="flex h-[67px] shrink-0 items-center bg-[#e8efe4] pt-[2px] pl-[21px] text-[28px]">Modify | Reference Planes</div>
      <div className="h-[5px] shrink-0 bg-[#bdbdbd]" />
      <div className="flex min-h-0 flex-1">
        <PropertiesPalette />
        <main className="flex min-w-0 flex-1 flex-col">
          <ViewTabs />
          <DrawingCanvas />
        </main>
      </div>
    </div>
  );
}
